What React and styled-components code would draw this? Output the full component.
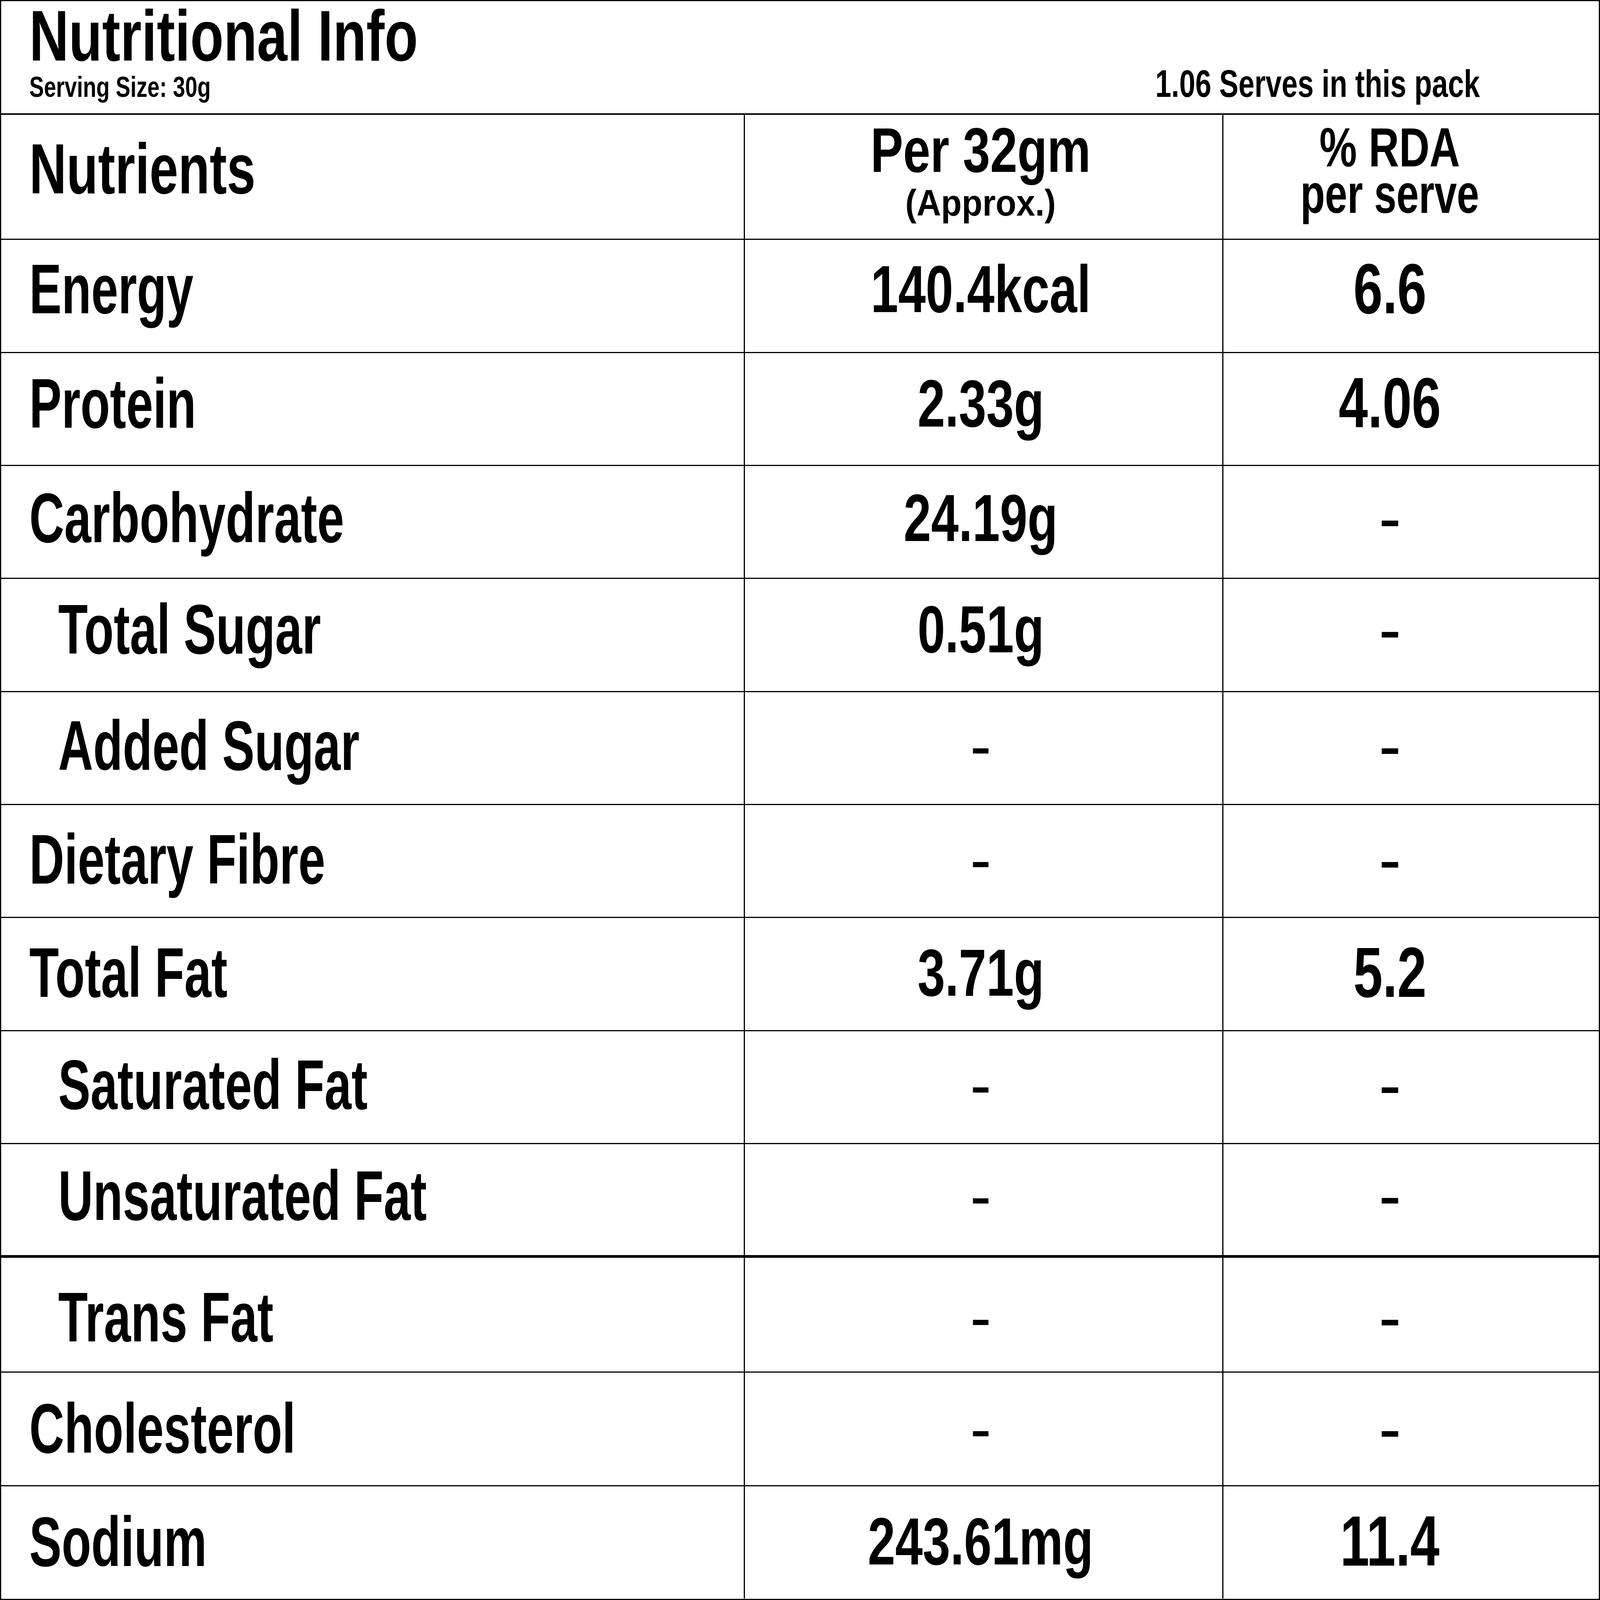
import React from "react";
import styled, { createGlobalStyle, css } from "styled-components";

// the label is 4792 x 5025 units: 1rem = 100 units of height, widths go by vw
const GlobalStyle = createGlobalStyle`
  * {
    box-sizing: border-box;
  }
  html {
    font-size: calc(100vh / 50.25);
  }
  html,
  body {
    margin: 0;
    padding: 0;
    overflow: hidden;
    background: #fff;
  }
  body {
    font-family: "Liberation Sans", Arial, sans-serif;
    color: #000;
  }
`;

// lift = extra top padding (rem), the printed rows do not sit at the same height
const nutrients = [
  { name: "Energy", per: "140.4kcal", rda: "6.6", lift: 0 },
  { name: "Protein", per: "2.33g", rda: "4.06", lift: 0.08 },
  { name: "Carbohydrate", per: "24.19g", rda: "-", lift: 0.18 },
  { name: "Total Sugar", per: "0.51g", rda: "-", sub: true, lift: 0.08 },
  { name: "Added Sugar", per: "-", rda: "-", sub: true, lift: 0.28 },
  { name: "Dietary Fibre", per: "-", rda: "-", lift: 0.32 },
  { name: "Total Fat", per: "3.71g", rda: "5.2", lift: 0.34 },
  { name: "Saturated Fat", per: "-", rda: "-", sub: true, lift: 0.28 },
  { name: "Unsaturated Fat", per: "-", rda: "-", sub: true, lift: 0.17, height: 3.57, line: 0.09 },
  { name: "Trans Fat", per: "-", rda: "-", sub: true, lift: 0.59, height: 3.6 },
  { name: "Cholesterol", per: "-", rda: "-", lift: 0.41, height: 3.58 },
  { name: "Sodium", per: "243.61mg", rda: "11.4", lift: 0.37, height: 3.52, line: 0 },
];

// condensed look: the installed faces are wide, so squeeze them horizontally
const squeezed = css`
  display: inline-block;
  white-space: nowrap;
  font-weight: 700;
  transform-origin: left center;
`;

function NutritionInfo() {
  return (
    <Panel>
      <Header>
        <Title>Nutritional Info</Title>
        <InfoLine>
          <ServingText>Serving Size: 30g</ServingText>
          <PackText>1.06 Serves in this pack</PackText>
        </InfoLine>
      </Header>

      <Row $height={3.93} $line={0.04}>
        <HeadNameCell>
          <HeadLabel>Nutrients</HeadLabel>
        </HeadNameCell>
        <HeadValueCell $padTop={0.12} $padRight={0.355}>
          <PerHead>Per 32gm</PerHead>
          <ApproxHead>(Approx.)</ApproxHead>
        </HeadValueCell>
        <HeadValueCell $padTop={0.29} $padRight={2.65}>
          <RdaHead>% RDA</RdaHead>
          <RdaSub>per serve</RdaSub>
        </HeadValueCell>
      </Row>

      {nutrients.map((item) => (
        <Row
          key={item.name}
          $height={item.height ?? 3.55}
          $line={item.line ?? 0.04}
        >
          <NameCell $sub={item.sub} $lift={item.lift}>
            <Label>{item.name}</Label>
          </NameCell>
          <ValueCell $padRight={0.355} $lift={item.lift}>
            <Value $dash={item.per === "-"}>{item.per}</Value>
          </ValueCell>
          <ValueCell $padRight={2.65} $lift={item.lift}>
            <RdaValue $dash={item.rda === "-"}>{item.rda}</RdaValue>
          </ValueCell>
        </Row>
      ))}
    </Panel>
  );
}

export default function App() {
  return (
    <>
      <GlobalStyle />
      <NutritionInfo />
    </>
  );
}

const Panel = styled.main`
  width: 100vw;
  height: 100vh;
  overflow: hidden;
  border: 0.04rem solid #000;
  background: #fff;
`;

const Header = styled.header`
  height: 3.57rem;
  border-bottom: 0.05rem solid #000;
  padding: 0 7.43vw 0 1.753vw;
`;

const Title = styled.h1`
  ${squeezed};
  margin: 0;
  font-size: 2.25rem;
  line-height: 2.18rem;
  transform: scaleX(0.763);
`;

const InfoLine = styled.div`
  display: flex;
  justify-content: space-between;
  align-items: baseline;
  margin-top: -0.18rem;
`;

const ServingText = styled.span`
  ${squeezed};
  font-size: 0.92rem;
  line-height: 1;
  transform: scaleX(0.748);
`;

const PackText = styled.span`
  ${squeezed};
  font-size: 1.2rem;
  line-height: 1;
  transform: scaleX(0.753);
  transform-origin: right center;
`;

const Row = styled.div`
  display: grid;
  grid-template-columns: 46.41vw 29.9vw 1fr;
  height: ${(p) => p.$height}rem;
  border-bottom: ${(p) => p.$line}rem solid #000;
`;

const HeadNameCell = styled.div`
  padding: 0.59rem 0 0 1.753vw;
`;

const HeadValueCell = styled.div`
  display: flex;
  flex-direction: column;
  align-items: center;
  border-left: 0.04rem solid #000;
  padding: ${(p) => p.$padTop}rem ${(p) => p.$padRight}vw 0 0;
`;

const HeadLabel = styled.span`
  ${squeezed};
  font-size: 2.23rem;
  line-height: 1;
  transform: scaleX(0.726);
`;

const PerHead = styled.span`
  ${squeezed};
  font-size: 1.98rem;
  line-height: 1;
  transform: scaleX(0.776);
  transform-origin: center;
`;

const ApproxHead = styled.span`
  ${squeezed};
  margin-top: 0.1rem;
  font-size: 1.15rem;
  line-height: 1;
  transform: scaleX(0.925);
  transform-origin: center;
`;

const RdaHead = styled.span`
  ${squeezed};
  font-size: 1.72rem;
  line-height: 1.46rem;
  transform: scaleX(0.77);
  transform-origin: center;
`;

const RdaSub = styled(RdaHead)`
  transform: scaleX(0.734);
`;

const NameCell = styled.div`
  display: flex;
  align-items: center;
  padding: ${(p) => p.$lift}rem 0 0.44rem ${(p) => (p.$sub ? 3.568 : 1.753)}vw;
`;

const ValueCell = styled.div`
  display: flex;
  align-items: center;
  justify-content: center;
  border-left: 0.04rem solid #000;
  padding: ${(p) => p.$lift}rem ${(p) => p.$padRight}vw 0.44rem 0;
`;

const Label = styled.span`
  ${squeezed};
  font-size: 2.22rem;
  line-height: 1;
  transform: scaleX(0.685);
`;

const Value = styled.span`
  ${squeezed};
  font-size: 2.1rem;
  line-height: 1;
  font-weight: ${(p) => (p.$dash ? 400 : 700)};
  transform: scaleX(${(p) => (p.$dash ? 0.95 : 0.74)});
  transform-origin: center;
`;

const RdaValue = styled(Value)`
  font-size: 2.23rem;
`;
